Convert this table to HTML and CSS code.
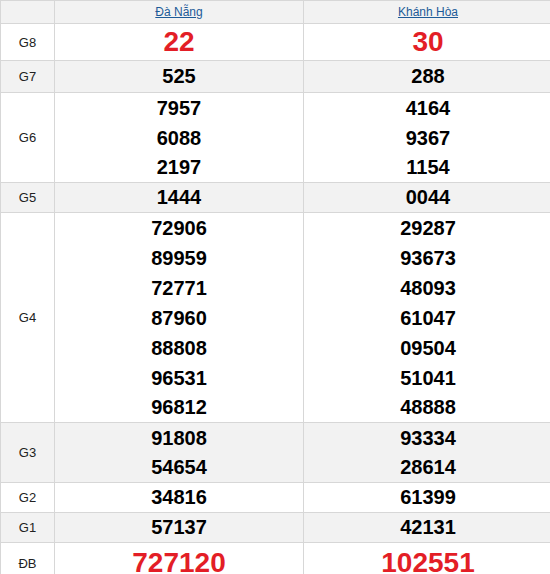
FILE: index.html
```html
<!DOCTYPE html>
<html lang="vi">
<head>
<meta charset="utf-8">
<title>Kết quả xổ số</title>
<link rel="stylesheet" href="styles.css">
</head>
<body>
<table class="kq">
  <colgroup>
    <col class="c-label">
    <col class="c-prov">
    <col class="c-prov2">
  </colgroup>
  <thead>
    <tr class="r-head">
      <th></th>
      <th><a href="#">Đà Nẵng</a></th>
      <th><a href="#">Khánh Hòa</a></th>
    </tr>
  </thead>
  <tbody>
    <tr class="r-g8">
      <td class="lbl">G8</td>
      <td class="big red"><div>22</div></td>
      <td class="big red"><div>30</div></td>
    </tr>
    <tr class="r-g7 alt">
      <td class="lbl">G7</td>
      <td class="num"><div>525</div></td>
      <td class="num"><div>288</div></td>
    </tr>
    <tr class="r-g6">
      <td class="lbl">G6</td>
      <td class="num"><div>7957</div><div>6088</div><div>2197</div></td>
      <td class="num"><div>4164</div><div>9367</div><div>1154</div></td>
    </tr>
    <tr class="r-g5 alt">
      <td class="lbl">G5</td>
      <td class="num"><div>1444</div></td>
      <td class="num"><div>0044</div></td>
    </tr>
    <tr class="r-g4">
      <td class="lbl">G4</td>
      <td class="num"><div>72906</div><div>89959</div><div>72771</div><div>87960</div><div>88808</div><div>96531</div><div>96812</div></td>
      <td class="num"><div>29287</div><div>93673</div><div>48093</div><div>61047</div><div>09504</div><div>51041</div><div>48888</div></td>
    </tr>
    <tr class="r-g3 alt">
      <td class="lbl">G3</td>
      <td class="num"><div>91808</div><div>54654</div></td>
      <td class="num"><div>93334</div><div>28614</div></td>
    </tr>
    <tr class="r-g2">
      <td class="lbl">G2</td>
      <td class="num"><div>34816</div></td>
      <td class="num"><div>61399</div></td>
    </tr>
    <tr class="r-g1 alt">
      <td class="lbl">G1</td>
      <td class="num"><div>57137</div></td>
      <td class="num"><div>42131</div></td>
    </tr>
    <tr class="r-db">
      <td class="lbl">ĐB</td>
      <td class="big red db"><div>727120</div></td>
      <td class="big red db"><div>102551</div></td>
    </tr>
  </tbody>
</table>
</body>
</html>
```

FILE: styles.css
```css
html, body {
  margin: 0;
  padding: 0;
  background: #fff;
  overflow: hidden;
}

.kq {
  border-collapse: collapse;
  table-layout: fixed;
  width: 552px;
  font-family: "Liberation Sans", Arial, sans-serif;
  color: #000;
}

.c-label { width: 54px; }
.c-prov { width: 249px; }
.c-prov2 { width: 249px; }

.kq th,
.kq td {
  border: 1px solid #d7d7d7;
  padding: 0;
  text-align: center;
  vertical-align: middle;
}

.r-head th {
  background: #f2f2f2;
  height: 22px;
  font-size: 12px;
  font-weight: normal;
  line-height: 14px;
}

.r-head a {
  color: #1d5b98;
  text-decoration: underline;
}

.alt td { background: #f2f2f2; }

.lbl {
  font-size: 13px;
  color: #222;
}

.num div {
  font-size: 20px;
  font-weight: bold;
  line-height: 30px;
}

.num div:last-child {
  line-height: 29px;
}

.big div {
  font-size: 28px;
  font-weight: bold;
  line-height: 36px;
}

.red { color: #e31e26; }

.r-g8 td { height: 36px; }
.r-g7 .num div { line-height: 31px; }
.r-db td { height: 40px; }
.db div { line-height: 40px; }
```
